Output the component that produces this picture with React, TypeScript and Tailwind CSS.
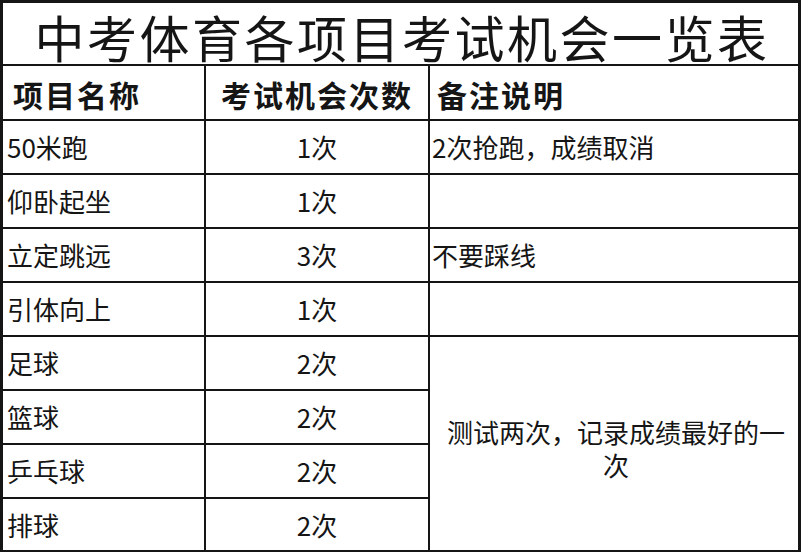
import React from 'react';

const rows: [string, string, string | null][] = [
  ['50米跑', '1次', '2次抢跑，成绩取消'],
  ['仰卧起坐', '1次', ''],
  ['立定跳远', '3次', '不要踩线'],
  ['引体向上', '1次', ''],
  ['足球', '2次', null],
  ['篮球', '2次', null],
  ['乒乓球', '2次', null],
  ['排球', '2次', null],
];

export default function App() {
  return (
    <div className="w-[801px] h-[552px] bg-white font-['Noto_Sans_CJK_SC',sans-serif] text-[#151515]">
      <div className="w-full h-full border-t-[3px] border-x-[3px] border-b-2 border-[#151515] bg-[#151515] grid grid-cols-[201px_222px_368px] grid-rows-[61px_53px_repeat(7,52px)_51px] gap-[2px]">
        <div className="col-span-3 bg-white flex items-center justify-center pt-[4px]">
          <span className="text-[50px] leading-none tracking-[2.5px] pl-[3px] whitespace-nowrap">中考体育各项目考试机会一览表</span>
        </div>

        <div className="bg-white flex items-center pl-[10px] pt-[2px]">
          <span className="text-[30px] leading-none font-bold tracking-[2px]">项目名称</span>
        </div>
        <div className="bg-white flex items-center justify-center pt-[2px]">
          <span className="text-[30px] leading-none font-bold tracking-[2px]">考试机会次数</span>
        </div>
        <div className="bg-white flex items-center pl-[7px] pt-[2px]">
          <span className="text-[30px] leading-none font-bold tracking-[2px]">备注说明</span>
        </div>

        {rows.map(([name, times, note], i) => (
          <React.Fragment key={name}>
            <div className="bg-white flex items-center pl-[4px]">
              <span className="text-[26px] leading-none">{name}</span>
            </div>
            <div className="bg-white flex items-center justify-center">
              <span className="text-[26px] leading-none">{times}</span>
            </div>
            {note !== null && (
              <div className="bg-white flex items-center pl-[2px]">
                <span className="text-[26px] leading-none">{note}</span>
              </div>
            )}
            {i === 4 && (
              <div className="row-span-4 bg-white flex items-center justify-center pt-[8px]">
                <p className="w-[342px] text-center text-[26px] leading-[33px] pl-[4px]">测试两次，记录成绩最好的一次</p>
              </div>
            )}
          </React.Fragment>
        ))}
      </div>
    </div>
  );
}
